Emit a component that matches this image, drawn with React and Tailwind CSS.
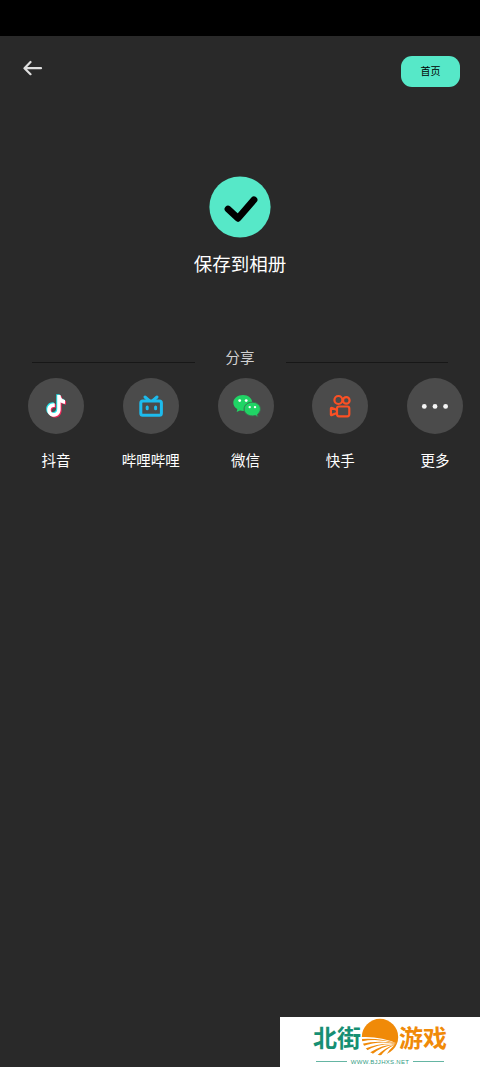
import React from "react";

const NOTE =
  "M10.9 0h3.6c.3 2.9 2 4.7 4.9 5v3.700c-1.800 0-3.400-.5-4.800-1.500v7.300c0 4.600-3 7.500-7.100 7.500C3.300 22 0 19.100 0 15.100c0-4.300 3.600-7.300 8.200-6.800v3.900c-2.400-.6-4.400.8-4.400 2.900 0 1.800 1.500 3.100 3.400 3.100 2.300 0 3.700-1.400 3.700-4z";

const DouyinIcon = () => (
  <svg width="40" height="40" viewBox="0 0 40 40">
    <path d={NOTE} fill="#25e5ea" transform="translate(10.200 8.200) scale(.92 .98)" />
    <path d={NOTE} fill="#f5265a" transform="translate(12.200 10) scale(.92 .98)" />
    <path d={NOTE} fill="#fff" transform="translate(11.200 9.100) scale(.92 .98)" />
  </svg>
);

const BilibiliIcon = () => (
  <svg width="40" height="40" viewBox="0 0 40 40" fill="none" stroke="#1dbbed" strokeLinecap="round">
    <path d="M14 11l4 3.500M26 11l-4 3.500" strokeWidth="3" />
    <rect x="9.800" y="15" width="20.600" height="14.300" rx="2" strokeWidth="3" />
    <path d="M16.200 21v1.800M24.600 21v1.800" strokeWidth="3" />
  </svg>
);

const WechatIcon = () => (
  <svg width="40" height="40" viewBox="0 0 40 40">
    <path
      d="M17 9c5.200 0 9.300 3.400 9.300 8s-4.100 8-9.300 8c-1 0-2-.1-3-.4L10.700 26l.6-2.900C9 21.700 7.300 19.500 7.300 17c0-4.600 4.400-8 9.700-8z"
      fill="#20d465"
    />
    <path
      d="M26.300 16.200c4.600 0 8.100 3 8.100 6.800 0 2.100-1.100 4-2.900 5.300l.5 2.500-2.800-1.300c-.9.300-1.900.400-2.900.400-4.600 0-8.200-3-8.200-6.900s3.600-6.800 8.200-6.800z"
      fill="#20d465"
      stroke="#3f6b50"
      strokeWidth="1"
    />
    <g fill="#fff">
      <circle cx="13.700" cy="14.600" r="1.400" />
      <circle cx="20.200" cy="14.600" r="1.400" />
      <circle cx="23.700" cy="21.100" r="1.200" />
      <circle cx="29" cy="21.100" r="1.200" />
    </g>
  </svg>
);

const KuaishouIcon = () => (
  <svg width="40" height="40" viewBox="0 0 40 40" fill="none" stroke="#fb5024" strokeWidth="2.200" strokeLinejoin="round">
    <circle cx="18.400" cy="14" r="4" />
    <circle cx="26.300" cy="14.400" r="3.300" />
    <rect x="17" y="20.500" width="12.300" height="9.800" rx="2" />
    <path d="M17 24l-5.500-2.200c-.4 0-.6.200-.6.600v6.200c0 .4.300.6.600.5L17 27" />
  </svg>
);

const MoreIcon = () => (
  <svg width="40" height="40" viewBox="0 0 40 40" fill="#f5f5f5">
    <circle cx="9.300" cy="20.400" r="2.400" />
    <circle cx="20" cy="20.400" r="2.400" />
    <circle cx="30.600" cy="20.400" r="2.400" />
  </svg>
);

const SunLogo = () => (
  <svg className="shrink-0" width="38" height="38" viewBox="0 0 38 38">
    <circle cx="19" cy="19" r="18.200" fill="#f08a08" />
    <g fill="#fff">
      <path d="M0 19Q20 18 36 25.500Q20 19.800 0 21z" />
      <path d="M0 23.500Q18 19.800 35.500 25.700Q18 21.800 0 26z" />
      <path d="M1 28.500Q18 22 35 26Q19 24.300 3 31z" />
      <path d="M5 33Q18 25 34.500 26.200Q21 26.500 8 35z" />
      <path d="M11 36.500Q21 28 34 26.500Q24 29.500 15.500 38z" />
      <path d="M19.500 38Q25 30.500 33.500 27Q28 31.500 24.500 38z" />
    </g>
  </svg>
);

const shareItems = [
  { name: "抖音", icon: <DouyinIcon /> },
  { name: "哔哩哔哩", icon: <BilibiliIcon /> },
  { name: "微信", icon: <WechatIcon /> },
  { name: "快手", icon: <KuaishouIcon /> },
  { name: "更多", icon: <MoreIcon /> },
];

const ShareItem = ({ item }) => (
  <div className="flex w-14 flex-col items-center">
    <div className="flex h-14 w-14 items-center justify-center rounded-full bg-[#4b4b4b]">{item.icon}</div>
    <p className="mt-[17px] whitespace-nowrap text-[14.5px] leading-5 text-white">{item.name}</p>
  </div>
);

const Watermark = () => (
  <footer className="flex h-[50px] w-[200px] flex-col self-end bg-white pt-px">
    <div className="flex h-[38px] items-center justify-center text-[24px] leading-none font-bold">
      <span className="pt-1 text-[#168f73]">北街</span>
      <SunLogo />
      <span className="pt-1 text-[#f08a08]">游戏</span>
    </div>
    <div className="flex h-3 items-center justify-center gap-[3px]">
      <span className="h-px w-[31px] bg-[#65b5a3]"></span>
      <span className="w-[60px] text-center text-[6px] leading-none tracking-[0.3px] whitespace-nowrap text-[#339c85]">WWW.BJJHXS.NET</span>
      <span className="h-px w-[31px] bg-[#65b5a3]"></span>
    </div>
  </footer>
);

export default function App() {
  return (
    <div className="flex h-screen flex-col overflow-hidden bg-[#292929] font-['Liberation_Sans','Noto_Sans_CJK_SC',sans-serif]">
      <div className="h-[35.5px] shrink-0 bg-black"></div>
      <header className="flex h-[51.5px] items-end justify-between pr-5 pl-[23px]">
        <button className="mb-[11px]" aria-label="返回">
          <svg width="20" height="16" viewBox="0 0 20 16" fill="none" stroke="#dedede" strokeWidth="2.2" strokeLinecap="round" strokeLinejoin="round">
            <path d="M7.500 2L1.500 8.200l6 6M2 8.200h16" />
          </svg>
        </button>
        <button className="h-[31px] w-[59px] rounded-[11px] bg-[#56e8c8] text-[10px] text-black">首页</button>
      </header>
      <section className="flex flex-col items-center pt-[89px]">
        <svg width="62" height="62" viewBox="0 0 62 62">
          <circle cx="31" cy="31" r="30.600" fill="#56e8c8" />
          <path d="M19 33l10 9.300 16-18.500" fill="none" stroke="#000" strokeWidth="6.800" strokeLinecap="round" strokeLinejoin="round" />
        </svg>
        <h1 className="mt-[13px] text-[18.5px] leading-7 text-white">保存到相册</h1>
      </section>
      <section className="pt-[69px]">
        <div className="flex h-[18px] px-8">
          <div className="mt-[14px] h-px flex-1 bg-[#171717]"></div>
          <p className="w-[91px] pt-px text-center text-[14.5px] leading-[18px] text-[#d2d2d2]">分享</p>
          <div className="mt-[14px] h-px flex-1 bg-[#171717]"></div>
        </div>
        <div className="mt-3 flex justify-between pr-[17px] pl-7">
          {shareItems.map((item) => (
            <ShareItem key={item.name} item={item} />
          ))}
        </div>
      </section>
      <div className="flex-1"></div>
      <Watermark />
    </div>
  );
}
